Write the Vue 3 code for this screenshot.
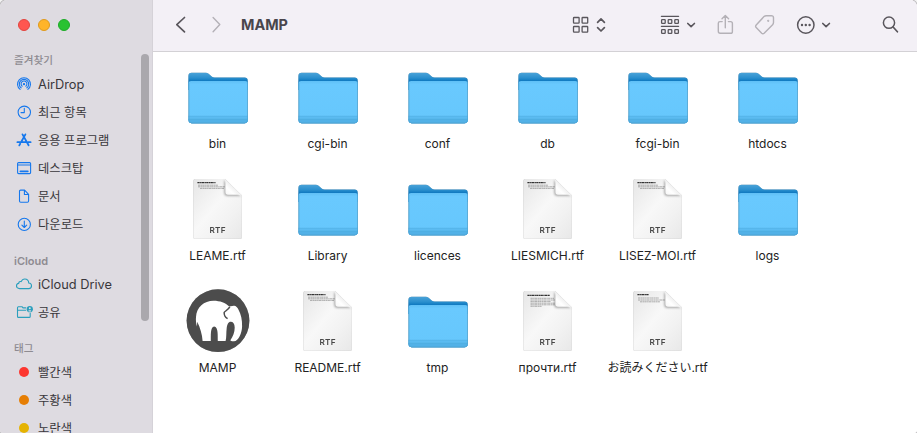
<script setup>
const sections = [
  {
    title: '즐겨찾기',
    items: [
      { label: 'AirDrop', icon: 'airdrop', latin: true },
      { label: '최근 항목', icon: 'clock' },
      { label: '응용 프로그램', icon: 'apps' },
      { label: '데스크탑', icon: 'desktop' },
      { label: '문서', icon: 'doc' },
      { label: '다운로드', icon: 'download' },
    ],
  },
  {
    title: 'iCloud',
    latin: true,
    items: [
      { label: 'iCloud Drive', icon: 'cloud', teal: true, latin: true },
      { label: '공유', icon: 'shared', teal: true },
    ],
  },
  {
    title: '태그',
    items: [
      { label: '빨간색', tag: 'red' },
      { label: '주황색', tag: 'orange' },
      { label: '노란색', tag: 'yellow' },
    ],
  },
]

const files = [
  { name: 'bin', kind: 'folder' },
  { name: 'cgi-bin', kind: 'folder' },
  { name: 'conf', kind: 'folder' },
  { name: 'db', kind: 'folder' },
  { name: 'fcgi-bin', kind: 'folder' },
  { name: 'htdocs', kind: 'folder' },
  { name: 'LEAME.rtf', kind: 'rtf' },
  { name: 'Library', kind: 'folder' },
  { name: 'licences', kind: 'folder' },
  { name: 'LIESMICH.rtf', kind: 'rtf' },
  { name: 'LISEZ-MOI.rtf', kind: 'rtf' },
  { name: 'logs', kind: 'folder' },
  { name: 'MAMP', kind: 'mamp' },
  { name: 'README.rtf', kind: 'rtf' },
  { name: 'tmp', kind: 'folder' },
  { name: 'прочти.rtf', kind: 'rtf', list: true },
  { name: 'お読みください.rtf', kind: 'rtf', short: true },
]
</script>

<template>
  <div class="desktop">
    <svg class="defs" width="0" height="0">
      <defs>
        <linearGradient id="tab" x1="0" y1="0" x2="0" y2="1">
          <stop offset="0" stop-color="#4ba3d8" />
          <stop offset="0.3" stop-color="#2a8fce" />
          <stop offset="0.5" stop-color="#0b76be" />
          <stop offset="1" stop-color="#0873bb" />
        </linearGradient>
        <linearGradient id="front" x1="0" y1="0" x2="0" y2="1">
          <stop offset="0" stop-color="#5fbff5" />
          <stop offset="0.08" stop-color="#69c9fe" />
          <stop offset="1" stop-color="#66c7fc" />
        </linearGradient>
        <linearGradient id="paper" x1="0" y1="0" x2="1" y2="1">
          <stop offset="0" stop-color="#e6e6e6" />
          <stop offset="0.45" stop-color="#f8f8f8" />
          <stop offset="0.7" stop-color="#f2f2f2" />
          <stop offset="1" stop-color="#e8e8e8" />
        </linearGradient>
        <linearGradient id="curl" x1="0" y1="1" x2="1" y2="0">
          <stop offset="0" stop-color="#f4f4f4" />
          <stop offset="0.3" stop-color="#ffffff" />
          <stop offset="0.5" stop-color="#f0f0f0" />
        </linearGradient>
      </defs>
    </svg>
    <div class="window">
      <aside class="sidebar">
        <div class="lights">
          <span class="light close"></span>
          <span class="light mini"></span>
          <span class="light zoom"></span>
        </div>
        <nav class="nav">
          <section v-for="s in sections" :key="s.title">
            <h2 class="heading" :class="{ latin: s.latin }">{{ s.title }}</h2>
            <div v-for="i in s.items" :key="i.label" class="item" :class="{ latin: i.latin }">
              <span class="glyph" :class="{ teal: i.teal }">
                <span v-if="i.tag" class="dot" :class="i.tag"></span>
                <svg v-else viewBox="0 0 16 16" width="16" height="16" class="line">
                  <template v-if="i.icon === 'airdrop'">
                    <path d="M4.1 13.4A6.5 6.5 0 1 1 11.9 13.4M5.1 11.8A4.7 4.7 0 1 1 10.9 11.8M6.2 10.2A2.9 2.9 0 1 1 9.8 10.2" />
                    <circle cx="8" cy="8.2" r="0.6" fill="currentColor" />
                  </template>
                  <template v-else-if="i.icon === 'clock'">
                    <circle cx="8.3" cy="8.3" r="6.2" />
                    <path d="M8.3 4.2V8.6H5" />
                  </template>
                  <template v-else-if="i.icon === 'apps'">
                    <path class="thick" d="M6.5 2.4 12.6 13.3M9.4 2.4 5.6 9.2M4.2 11.8 3.3 13.4M1.4 10.2H9.4M12.2 10.2H14.6" />
                  </template>
                  <template v-else-if="i.icon === 'desktop'">
                    <rect x="1.6" y="2.6" width="13" height="11" rx="1" />
                    <path d="M1.6 5H14.6" />
                    <path class="thick" d="M4.4 11.3H11.8" />
                  </template>
                  <template v-else-if="i.icon === 'doc'">
                    <path d="M4.6 2.1H8.6L12.6 6.3V13.1Q12.6 14.3 11.4 14.3H4.7Q3.5 14.3 3.5 13.1V3.2Q3.5 2.1 4.6 2.1ZM8.4 2.2V6.5H12.6" />
                  </template>
                  <template v-else-if="i.icon === 'download'">
                    <circle cx="8.3" cy="8.4" r="6.1" />
                    <path d="M8.3 5V11.3M5.9 9.2 8.3 11.5 10.7 9.2" />
                  </template>
                  <template v-else-if="i.icon === 'cloud'">
                    <path d="M3.6 12.6C1.4 12.6.5 11.2.5 9.9.5 8.4 1.6 7.5 2.7 7.4 2.7 5.9 4.1 5.2 5.2 5.6 5.9 3.9 7.2 3 8.8 3 11.2 3 12.8 4.8 12.7 7 14.6 7.1 15.5 8.4 15.5 9.8 15.5 11.5 14.3 12.6 12.8 12.6Z" />
                  </template>
                  <template v-else>
                    <path d="M9.8 3.9H7L6 2.7H2.4Q1.5 2.7 1.5 3.7V12.4Q1.5 13.4 2.5 13.4H13.2Q14.2 13.4 14.2 12.4V9.2M1.5 6.2H9.6" />
                    <circle cx="13.8" cy="5.2" r="3.1" fill="currentColor" stroke="none" />
                    <path d="M13 6.9H14.6" stroke="#dedbe1" />
                    <circle cx="13.8" cy="4.3" r="1" fill="#dedbe1" stroke="none" />
                  </template>
                </svg>
              </span>
              <span>{{ i.label }}</span>
            </div>
          </section>
        </nav>
        <div class="scrollbar"></div>
      </aside>

      <main class="main">
        <header class="toolbar">
          <svg width="764" height="51" viewBox="153 0 764 51" class="tools">
            <g class="dark">
              <path class="nav-arrow" d="M184.5 17.5 176.8 24.6 184.5 31.8" />
              <g class="thin">
                <rect x="573.5" y="17.5" width="5.6" height="5.6" rx="0.6" />
                <rect x="582.1" y="17.5" width="5.6" height="5.6" rx="0.6" />
                <rect x="573.5" y="26.5" width="5.6" height="5.6" rx="0.6" />
                <rect x="582.1" y="26.5" width="5.6" height="5.6" rx="0.6" />
              </g>
              <path d="M597.6 22.3 601 18.9 604.4 22.3M597.6 27.6 601 31 604.4 27.6" />
              <g class="thin">
                <path d="M661.4 16.3H678.6M661.4 26.3H678.6" />
                <rect x="661.6" y="19.7" width="3.6" height="3.6" rx="0.6" />
                <rect x="668.2" y="19.7" width="3.6" height="3.6" rx="0.6" />
                <rect x="674.8" y="19.7" width="3.6" height="3.6" rx="0.6" />
                <rect x="661.6" y="29.7" width="3.6" height="3.6" rx="0.6" />
                <rect x="668.2" y="29.7" width="3.6" height="3.6" rx="0.6" />
                <rect x="674.8" y="29.7" width="3.6" height="3.6" rx="0.6" />
              </g>
              <path d="M687.8 23.5 691.1 26.6 694.4 23.5" />
              <circle class="mid" cx="805.8" cy="25" r="8.2" />
              <g class="solid">
                <circle cx="802" cy="25" r="1.2" />
                <circle cx="805.8" cy="25" r="1.2" />
                <circle cx="809.6" cy="25" r="1.2" />
              </g>
              <path d="M822.8 23.5 826.1 26.6 829.4 23.5" />
              <circle class="mid" cx="889" cy="22.7" r="5.6" />
              <path d="M893.1 27 897.4 31.8" />
            </g>
            <g class="faded">
              <path d="M213.1 17.5 219.8 24.6 213.1 31.8" />
              <path d="M722.2 21.6H720Q718.3 21.6 718.3 23.3V31.3Q718.3 33.3 720.2 33.3H730.6Q732.4 33.3 732.4 31.4V23.4Q732.4 21.6 730.6 21.6H728.4M725.3 27.8V15.6M722 18.7 725.3 15.4 728.6 18.7" />
              <path d="M764 16.6Q765 15.7 766.2 15.7L771.3 15.6Q773.4 15.7 773.5 17.6V22.6Q773.5 23.8 772.6 24.7L764.1 33.3Q762.9 34.4 761.7 33.3L756.2 27.6Q755 26.3 756.2 25Z" />
              <circle cx="768.2" cy="20.8" r="0.4" fill="#b4b1b7" />
            </g>
          </svg>
          <h1 class="title">MAMP</h1>
        </header>

        <div class="grid">
          <div v-for="f in files" :key="f.name" class="file">
            <svg v-if="f.kind === 'folder'" class="pic" width="64" height="64" viewBox="0 0 64 64">
              <path d="M2.4 12V10Q2.4 6.7 5.6 6.7H19.8Q21.4 6.7 22.6 7.8L26 10.8Q27 11.6 28.6 11.6H58.6Q61.7 11.6 61.7 14.8V24H2.4Z" fill="url(#tab)" />
              <path d="M2.6 17.4Q2.6 15 5 15H59.3Q61.7 15 61.7 17.4V54Q61.7 57.2 58.5 57.2H5.8Q2.6 57.2 2.6 54Z" fill="url(#front)" />
              <path d="M2.6 50H61.7V54Q61.7 57.2 58.5 57.2H5.8Q2.6 57.2 2.6 54Z" fill="#5bbbf1" />
              <path d="M2.6 52.9H61.7V54Q61.7 57.2 58.5 57.2H5.8Q2.6 57.2 2.6 54Z" fill="#52b1e7" />
              <path d="M2.6 50.2H61.7M2.6 53.1H61.7" stroke="#4ca8da" stroke-width="0.4" />
              <path d="M2.9 17V54Q3 56.9 5.8 56.9H58.5Q61.4 56.9 61.5 54V17" fill="none" stroke="#4ea3d2" stroke-width="0.7" />
            </svg>
            <svg v-else-if="f.kind === 'rtf'" class="pic doc" width="64" height="64" viewBox="0 0 64 64">
              <path d="M9.4 1H39L55.8 17.4V59.4Q55.8 60.8 54.4 60.8H8.8Q7.4 60.8 7.4 59.4V3Q7.4 1 9.4 1Z" fill="url(#paper)" />
              <g v-if="f.list" class="lines">
                <path class="bold" d="M11.4 5.3H34" />
                <path d="M14.5 8.3H38M14.5 10H39M14.5 11.6H35M14.5 13.2H39M14.5 14.8H39M14.5 16.3H26" />
              </g>
              <g v-else-if="f.short" class="lines">
                <path class="bold" d="M11.4 4.6H23" />
                <path d="M12 8H33M12 10H39M14 11.8H34" />
              </g>
              <g v-else class="lines">
                <path class="bold" d="M11.4 4.6H29.5" />
                <path d="M12 7.2H32M12 8.8H39M14 10.4H38" />
              </g>
              <path class="curl" d="M39 1 55.8 17.6Q54.5 16.8 52 16.8H42Q39.4 16.8 39.4 14V4.5Q39.4 2.4 39 1Z" fill="url(#curl)" />
              <text x="31.7" y="55" class="rtf">RTF</text>
            </svg>
            <svg v-else class="pic" width="64" height="64" viewBox="0 0 64 64">
              <circle cx="32" cy="30.7" r="31.4" fill="#4c4c4c" />
              <path fill="#fff" d="M10 27C10.6 17 18 10.7 27.5 10.7 34 10.7 39.5 12.8 43.2 16.4L47.8 15.8C50 15.6 51.3 17.6 52.4 19.4 55 24 56.3 30 56.1 36.4 55.9 43 52.6 50.8 48 51.3 46.2 51.5 44.6 51 44.4 50.2 47 46.5 48.7 42.5 48.7 37.5 48.7 33.8 47 31.8 44.8 31.8 42.3 31.8 41.2 34.5 40.7 38 40.1 42.5 40.6 47.5 39.6 51H31.8C31.6 46 32.5 36.6 28.2 36.4 24 36.6 25 46 24.8 51H16.6C16.2 44.5 14.2 37.5 11.2 31.7L11 36.5C10 33.5 9.7 30 10 27Z" />
              <path d="M43.8 16.8C42 20 39.4 20.8 38.2 22.4 37.9 25.4 39.3 27.4 41.6 28.6" fill="none" stroke="#4c4c4c" stroke-width="1.5" />
            </svg>
            <span class="name">{{ f.name }}</span>
          </div>
        </div>
      </main>
    </div>
  </div>
</template>

<style>
body {
  margin: 0;
}
</style>

<style scoped>
.desktop {
  width: 917px;
  height: 433px;
  overflow: hidden;
  background: #f4f4f4;
  font-family: Inter, 'Noto Sans CJK KR', sans-serif;
}
.defs {
  position: absolute;
}
.window {
  display: flex;
  height: 433px;
  border-radius: 7px 7px 3px 3px;
  overflow: hidden;
  box-shadow: 0 0 0 1px #bcbabd;
}
.sidebar {
  position: relative;
  box-sizing: border-box;
  width: 153px;
  flex: none;
  background: #dedbe1;
  border-right: 1px solid #d5d2d8;
}
.lights {
  display: flex;
  gap: 8px;
  padding: 19px 0 0 18px;
}
.light {
  box-sizing: border-box;
  width: 12px;
  height: 12px;
  border-radius: 50%;
}
.close {
  background: #ff5650;
  border: 1px solid #e2443f;
}
.mini {
  background: #ffb429;
  border: 1px solid #df9a1c;
}
.zoom {
  background: #29c231;
  border: 1px solid #1dab27;
}
.nav {
  margin-top: 7px;
}
.heading {
  box-sizing: border-box;
  height: 32px;
  margin: 0;
  padding: 14px 0 0 14px;
  font-size: 10.6px;
  line-height: 18px;
  font-weight: 500;
  color: #8e8b91;
}
.heading.latin {
  font-size: 11px;
  font-weight: 600;
}
.item {
  display: flex;
  align-items: center;
  gap: 6px;
  height: 28px;
  padding-left: 16px;
  font-size: 12.3px;
  color: #39373b;
  white-space: nowrap;
}
.item.latin {
  font-size: 12.8px;
}
.glyph {
  display: flex;
  justify-content: center;
  width: 16px;
  color: #1678ed;
}
.glyph.teal {
  color: #2a9fbd;
}
.line {
  fill: none;
  stroke: currentColor;
  stroke-width: 1.1;
  stroke-linecap: round;
  stroke-linejoin: round;
  overflow: visible;
}
.thick {
  stroke-width: 1.8;
}
.dot {
  width: 10px;
  height: 10px;
  border-radius: 50%;
}
.red {
  background: #fc3630;
}
.orange {
  background: #e67e04;
}
.yellow {
  background: #e5b302;
}
.scrollbar {
  position: absolute;
  top: 54px;
  right: 3px;
  width: 8px;
  height: 267px;
  border-radius: 4px;
  background: #aaa8ad;
}
.main {
  flex: 1;
  background: #fff;
}
.toolbar {
  position: relative;
  height: 51px;
  background: #f3f0f6;
  border-bottom: 1px solid #d3d1d5;
}
.tools {
  display: block;
  fill: none;
  stroke-linecap: round;
  stroke-linejoin: round;
}
.dark {
  stroke: #59565c;
  stroke-width: 1.7;
}
.nav-arrow {
  stroke-width: 1.7;
}
.mid {
  stroke-width: 1.5;
}
.thin {
  stroke-width: 1.3;
}
.solid {
  fill: #59565c;
  stroke: none;
}
.faded {
  stroke: #b4b1b7;
  stroke-width: 1.4;
}
.title {
  position: absolute;
  left: 88px;
  top: 15px;
  margin: 0;
  font-size: 14.4px;
  line-height: 20px;
  font-weight: 650;
  color: #49464c;
}
.grid {
  display: grid;
  grid-template-columns: repeat(6, 110px);
  grid-auto-rows: 112px;
  padding: 14px 0 0 10px;
}
.file {
  display: flex;
  flex-direction: column;
  align-items: center;
}
.pic {
  display: block;
  overflow: visible;
  filter: drop-shadow(0 0.5px 0.6px rgba(0, 0, 0, 0.3));
}
.lines {
  stroke: #8e8e8e;
  stroke-width: 0.7;
  stroke-dasharray: 2.3 0.4 1.4 0.3;
}
.bold {
  stroke: #333;
  stroke-width: 1.2;
}
.curl {
  filter: drop-shadow(-0.5px 1px 1px rgba(0, 0, 0, 0.35));
}
.rtf {
  font: 600 8.2px Inter, sans-serif;
  letter-spacing: 0.3px;
  text-anchor: middle;
  fill: #484848;
}
.name {
  margin: 5px 1px 0 0;
  font-size: 12px;
  line-height: 18px;
  color: #222;
  white-space: nowrap;
}
</style>
